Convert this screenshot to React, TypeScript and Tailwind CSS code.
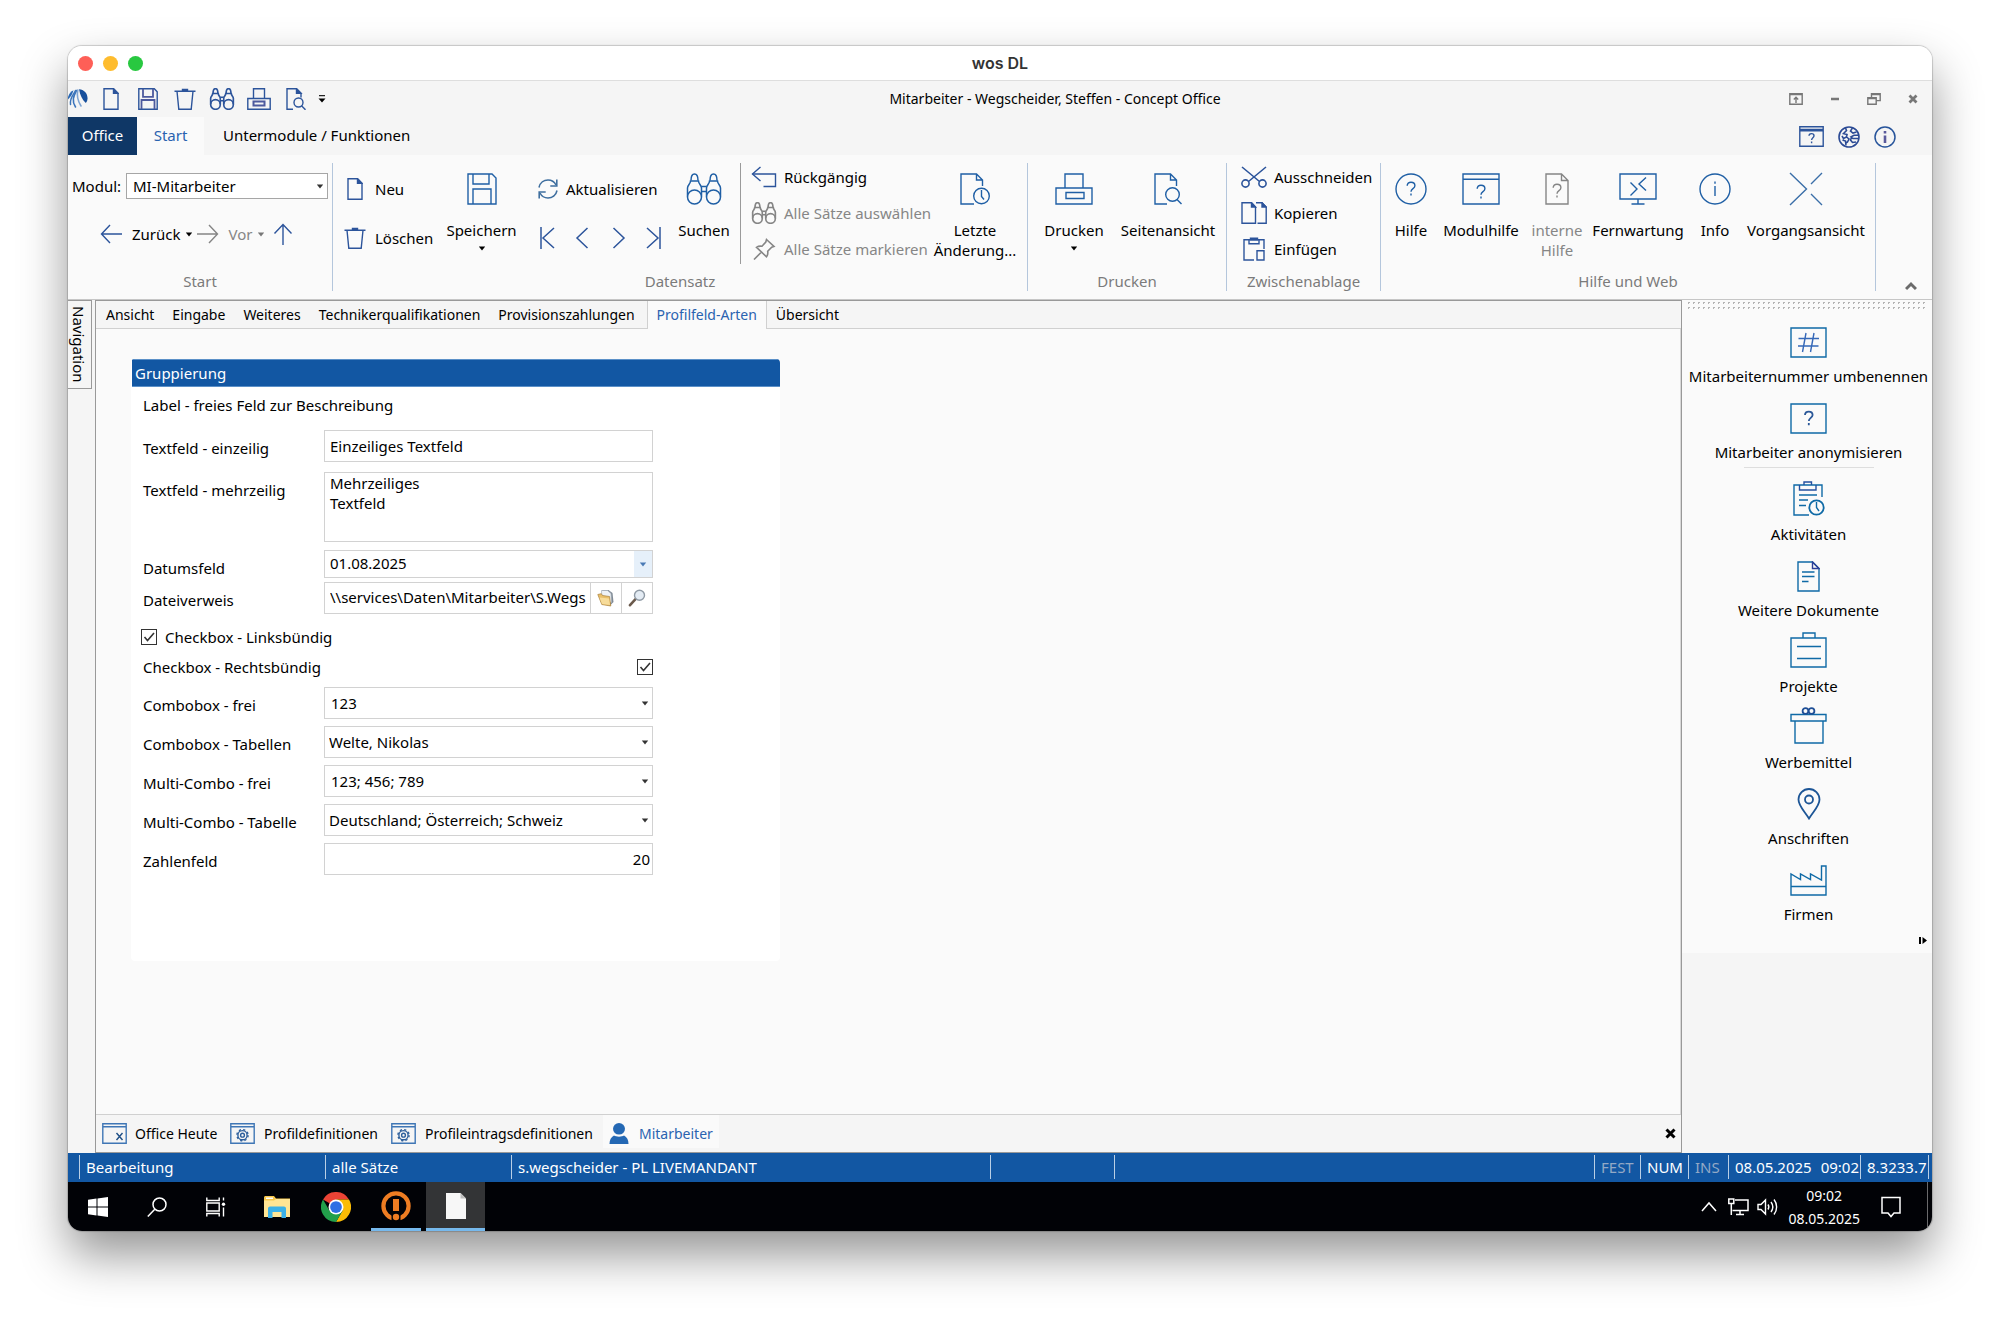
import React from "react";

type IconProps = { className?: string };

function Svg({
  w,
  h,
  className = "text-[#1f5fa5]",
  sw = 1.4,
  children,
}: {
  w: number;
  h: number;
  className?: string;
  sw?: number;
  children: React.ReactNode;
}) {
  return (
    <svg
      width={w}
      height={h}
      viewBox={`0 0 ${w} ${h}`}
      fill="none"
      stroke="currentColor"
      strokeWidth={sw}
      className={`shrink-0 ${className}`}
      aria-hidden="true"
    >
      {children}
    </svg>
  );
}

const SMALL = "text-[#2c549b]";
const GREY = "text-[#858585]";
const SIDE = "text-[#0f6aa6]";

/* ---------- small icons ---------- */
const DocS = () => (
  <Svg w={16} h={22} className={SMALL}>
    <path d="M1 .8h9.5L15 5.4v15.8H1z" />
    <path d="M10.500 .8v4.6H15z" fill="currentColor" />
  </Svg>
);
const SaveS = () => (
  <Svg w={20} h={22} className={SMALL}>
    <path d="M.8 .8h15.5l2.9 3v17.4H.8z" />
    <path d="M5 .8v8h10v-8M3.500 21V12h13v9" strokeWidth={1.8} stroke="#4d5a9e" />
  </Svg>
);
const TrashS = () => (
  <Svg w={22} h={22} className={SMALL}>
    <path d="M.5 3.200h21M3 3.200l1.800 18h12.400l1.800-18" />
    <path d="M8.500 3V1.500h5V3z" fill="currentColor" />
  </Svg>
);
const Binoc = ({ s = 1, className }: IconProps & { s?: number }) => (
  <svg
    width={s === 1 ? 36 : 26}
    height={s === 1 ? 32 : 22}
    viewBox="0 0 36 32"
    fill="none"
    stroke="currentColor"
    strokeWidth={s === 1 ? 1.5 : 2.4}
    className={`shrink-0 ${className ?? "text-[#1f5fa5]"}`}
    aria-hidden="true"
  >
    <circle cx="8.500" cy="24" r="7" />
    <circle cx="27.500" cy="24" r="7" />
    <path d="M1.500 23.500V15c0-3 3-4 3-7h8c0 3 3 4 3 7v8.500M20.500 23.500V15c0-3 3-4 3-7h8c0 3 3 4 3 7v8.500" />
    <path d="M5 7.500C5 4 6 1 8.500 1S12 4 12 7.500M24 7.500C24 4 25 1 27.500 1S31 4 31 7.500M15.500 13.500h5M15.500 18.500h5" />
  </svg>
);
const PrintS = () => (
  <Svg w={24} h={22} className={SMALL}>
    <path d="M.8 10.500h22.400v10.700H.8zM6.500 10.500V.8h11v9.700" />
    <path d="M6.500 13.500h11v4h-11z" strokeWidth={2} stroke="#4d5a9e" />
  </Svg>
);
const DocSearchS = () => (
  <Svg w={20} h={22} className={SMALL}>
    <path d="M7 21.200H1V.8h9.500L15 5.400v4.200" />
    <path d="M10.500 .8v4.600H15z" fill="currentColor" />
    <circle cx="12.500" cy="14.500" r="4.500" />
    <path d="M15.500 17.800l4 4" />
  </Svg>
);
const Caret = ({ className = "text-black" }: IconProps) => (
  <svg width="8" height="5" viewBox="0 0 8 5" className={`shrink-0 ${className}`} aria-hidden="true">
    <path d="M.8 .5h6.400L4 4.500z" fill="currentColor" />
  </svg>
);
const Refresh = () => (
  <Svg w={20} h={22} className="text-[#3f6f9f]" sw={1.6}>
    <path d="M1 9.500C2 4.500 6 2 10 2c3.500 0 6.500 2 8 5M19 12.500C18 17.500 14 20 10 20c-3.500 0-6.500-2-8-5" />
    <path d="M18.800 1.500V8h-6.500M1.200 20.500V14h6.500" />
  </Svg>
);
const ArrowL = () => (
  <Svg w={22} h={20} className={`mr-1.5 ${SMALL}`}>
    <path d="M10 1L1.500 10 10 19M1.500 10H22" />
  </Svg>
);
const ArrowR = () => (
  <Svg w={22} h={20} className={`mr-1.5 ${GREY}`}>
    <path d="M12 1l8.500 9L12 19M20.500 10H0" />
  </Svg>
);
const ArrowU = () => (
  <Svg w={20} h={22} className={SMALL}>
    <path d="M1.500 10.500L10 1.500l8.500 9M10 1.500V22" />
  </Svg>
);
const Nav = ({ d }: { d: string }) => (
  <Svg w={18} h={22} className={SMALL} sw={1.5}>
    <path d={d} />
  </Svg>
);
const Undo = () => (
  <Svg w={26} h={22} className={SMALL}>
    <path d="M9.500 1L1.500 8l8 7" />
    <path d="M1.500 8h23v12.500h-12" />
  </Svg>
);
const Pin = () => (
  <Svg w={24} h={22} className={GREY} sw={1.6}>
    <path d="M14.500 1.500l7.500 7-2.300.8-4 4c.3 2 0 4-1.200 5.500L4.500 9.300c1.600-1.100 3.500-1.400 5.500-1.100l3.800-4.200zM9.500 14L2 21.500" />
  </Svg>
);
const Scissors = () => (
  <Svg w={26} h={22} className={SMALL} sw={1.6}>
    <path d="M1 1l17.500 14.500M25 1L7.500 15.500" />
    <circle cx="4.500" cy="17.500" r="3.600" />
    <circle cx="21.500" cy="17.500" r="3.600" />
  </Svg>
);
const Copy = () => (
  <Svg w={26} h={22} className={SMALL}>
    <path d="M1 .8h9.500L14.500 5v16.200H1zM16.500 21.200h8.700V5L21 .8h-6" />
    <path d="M10.500 .8V5h4zM21 .8V5h4z" fill="currentColor" />
  </Svg>
);
const Paste = () => (
  <Svg w={22} h={24} className={SMALL}>
    <path d="M11 23H1V2.800h20V12M6 2.800v4h10v-4" />
    <path d="M7.500 2.800V1.200h7v1.600z" fill="currentColor" />
    <path d="M14 13.800h7V23h-7z" />
  </Svg>
);

/* ---------- large icons ---------- */
const SaveL = () => (
  <Svg w={30} h={32}>
    <path d="M1 1h24l4 4v26H1zM6 1v10h16V1M6 31V16h18v15" />
  </Svg>
);
const DocClockL = () => (
  <Svg w={30} h={32}>
    <path d="M14 31H1V1h15.500L22.500 7v6M16.500 1v6h6" />
    <circle cx="21.500" cy="23" r="7.800" />
    <path d="M21.500 17v6.500l2.500 3" />
  </Svg>
);
const PrintL = () => (
  <Svg w={38} h={32}>
    <path d="M1 15h36v16H1zM10 15V1h18v14M11 19.500h18v6H11z" />
  </Svg>
);
const DocSearchL = () => (
  <Svg w={28} h={32}>
    <path d="M13 31H1V1h15.500L22.500 7v6M16.500 1v6h6" />
    <circle cx="18.500" cy="21.500" r="6.800" />
    <path d="M23 26.500l4.500 4.500" />
  </Svg>
);
const HelpL = () => (
  <Svg w={32} h={32}>
    <circle cx="16" cy="16" r="15" />
    <path d="M12.200 12.800c0-2.300 1.600-3.600 3.800-3.600s3.900 1.300 3.900 3.500c0 2.900-3.900 3-3.900 6M16 20.600v2" />
  </Svg>
);
const ModHelpL = () => (
  <Svg w={38} h={32}>
    <path d="M1 1h36v30H1zM1 6.200h36" />
    <path d="M15.200 15.800c0-2.300 1.600-3.600 3.800-3.600s3.900 1.300 3.900 3.500c0 2.900-3.900 3-3.900 6M19 23.600v2" />
  </Svg>
);
const DocHelpL = () => (
  <Svg w={24} h={32} className={GREY}>
    <path d="M1 1h15.500L23 7.500V31H1zM16.500 1v6.500H23" />
    <path d="M8.200 14.800c0-2.300 1.600-3.600 3.800-3.600s3.900 1.300 3.900 3.500c0 2.900-3.900 3-3.900 6M12 22.600v2" />
  </Svg>
);
const RemoteL = () => (
  <Svg w={38} h={32}>
    <path d="M1 1h36v25H1zM19 26v4.500M12.500 31h13M11.500 9.500l6.500 6.500-6.500 6.500M27 4.500L20 11l7 6.500" />
  </Svg>
);
const InfoL = () => (
  <Svg w={32} h={32}>
    <circle cx="16" cy="16" r="15" />
    <path d="M16 13v10M16 8.500v2.300" />
  </Svg>
);
const CrossL = () => (
  <Svg w={34} h={34} className="text-[#3a6ea8]">
    <path d="M1 1l16.500 16L1 33M33 1L22 12M33 33L22 22" />
  </Svg>
);

/* ---------- sidebar icons ---------- */
const HashI = () => (
  <Svg w={37} h={31} className={SIDE}>
    <path d="M1 1h35v29H1z" />
    <path d="M16 6l-3.500 19M24 6l-3.500 19M8.500 11.500H29M8 19h20.500" stroke="#3568b8" />
  </Svg>
);
const QuestI = () => (
  <Svg w={37} h={31} className={SIDE}>
    <path d="M1 1h35v29H1z" />
    <path d="M15 12c0-2 1.500-3.400 3.800-3.400S22.600 10 22.600 12c0 2.800-3.800 3-3.800 6M18.800 20v2.300" stroke="#2a5798" strokeWidth={1.8} />
  </Svg>
);
const ActI = () => (
  <Svg w={32} h={35} className={SIDE}>
    <path d="M16 34H1V4h28v12M6 14h18M6 19h9M6 24.500h7" />
    <path d="M6.500 4v5H23V4M11 4V1h7.500v3" stroke="#2451a0" />
    <circle cx="23.500" cy="26.500" r="7.200" strokeWidth={1.8} />
    <path d="M23.500 21v5.500l2.500 3.500" />
  </Svg>
);
const DocI = () => (
  <Svg w={23} h={31} className={SIDE}>
    <path d="M1 1h14.500L22 7.500V30H1zM5 11h12.500M5 15.500h12.500M5 20.500h6.500" />
    <path d="M15.500 1v6.500H22z" stroke="#2b3f98" />
  </Svg>
);
const ProjI = () => (
  <Svg w={37} h={36} className={SIDE}>
    <path d="M1 6h35v29H1zM13 6V1h12v5M7 14.500h24M7 26.500h24" />
  </Svg>
);
const GiftI = () => (
  <Svg w={37} h={37} className={SIDE}>
    <path d="M1 7.500h35V14H1zM5 14h28v22H5z" />
    <g stroke="#1f4f96" strokeWidth={1.8}>
      <circle cx="15.500" cy="4" r="2.900" />
      <circle cx="21.500" cy="4" r="2.900" />
    </g>
  </Svg>
);
const PinI = () => (
  <Svg w={24} h={32} className="text-[#1c5596]" sw={1.8}>
    <path d="M12 30.500C7.500 23 1.500 18 1.500 11.500a10.500 10.500 0 0121 0C22.500 18 16.500 23 12 30.500z" />
    <circle cx="12" cy="11.500" r="4" />
  </Svg>
);
const FactoryI = () => (
  <Svg w={38} h={31} className={SIDE}>
    <path d="M1 21.500h35M1 30V9l9.500 5.500V9l10 5.500V9l11 6V1H36v29z" />
  </Svg>
);

/* ---------- ribbon parts ---------- */
function Big({
  icon,
  label,
  label2,
  caret,
  muted,
  className,
}: {
  icon: React.ReactNode;
  label: string;
  label2?: string;
  caret?: boolean;
  muted?: boolean;
  className: string;
}) {
  return (
    <button
      type="button"
      className={`flex shrink-0 flex-col items-center pt-[10px] whitespace-nowrap ${muted ? "text-[#868686]" : "text-black"} ${className}`}
    >
      <span className="flex h-8 items-center">{icon}</span>
      <span className="mt-[15px] leading-5">{label}</span>
      {label2 && <span className="leading-5">{label2}</span>}
      {caret && (
        <span className="pt-1.5">
          <Caret />
        </span>
      )}
    </button>
  );
}

function Row({ icon, label, muted }: { icon: React.ReactNode; label: string; muted?: boolean }) {
  return (
    <button type="button" className={`flex h-[30px] items-center gap-2 whitespace-nowrap ${muted ? "text-[#868686]" : "text-black"}`}>
      <span className="flex w-6 justify-center">{icon}</span>
      {label}
    </button>
  );
}

function Group({ label, className, children }: { label: string; className: string; children: React.ReactNode }) {
  return (
    <section className={`flex h-32 shrink-0 flex-col border-r border-[#b4c6dc] ${className}`}>
      <div className="flex flex-1">{children}</div>
      <div className="text-center leading-5 text-[#7b7b7b]">{label}</div>
    </section>
  );
}

function Ribbon() {
  return (
    <div className="flex items-start border-b border-[#c6c6c6] bg-[#fafafa] py-2">
      <Group label="Start" className="w-[265px]">
        <div className="w-full">
          <div className="flex h-[46px] items-center gap-1.5 pr-1 pl-1">
            <label htmlFor="modul" className="w-12">
              Modul:
            </label>
            <div className="relative flex-1">
              <select id="modul" className="h-[26px] w-full appearance-none border border-[#a6a6a6] bg-white px-1.5 pb-px leading-5">
                <option>MI-Mitarbeiter</option>
              </select>
              <Caret className="pointer-events-none absolute top-[11px] right-1 text-[#333]" />
            </div>
          </div>
          <div className="flex h-[50px] items-center gap-1 pl-8">
            <button type="button" className="flex items-center gap-1">
              <ArrowL /> Zurück
              <Caret />
            </button>
            <button type="button" className="flex items-center gap-1 text-[#868686]">
              <ArrowR /> Vor
              <Caret className="text-[#777]" />
            </button>
            <button type="button" aria-label="Aufwärts" className="ml-1">
              <ArrowU />
            </button>
          </div>
        </div>
      </Group>

      <Group label="Datensatz" className="w-[695px]">
        <div className="ml-[10px] w-[88px] shrink-0 pt-[2px]">
          <button type="button" className="flex h-12 items-center gap-2">
            <span className="flex w-6 justify-center">
              <DocS />
            </span>
            Neu
          </button>
          <button type="button" className="flex h-[50px] items-center gap-2">
            <span className="flex w-6 justify-center">
              <TrashS />
            </span>
            Löschen
          </button>
        </div>
        <Big icon={<SaveL />} label="Speichern" caret className="w-[101px]" />
        <div className="w-[140px] shrink-0 pt-[2px]">
          <button type="button" className="flex h-12 items-center gap-2 pl-1.5">
            <Refresh /> Aktualisieren
          </button>
          <div className="flex h-[50px] items-center">
            {[
              ["Erster", "M2 0v22M15 1L4 11l11 10"],
              ["Vorheriger", "M13.500 1L3 11l10.500 10"],
              ["Nächster", "M4.500 1L15 11 4.500 21"],
              ["Letzter", "M16 0v22M3 1l11 10L3 21"],
            ].map(([n, d]) => (
              <button key={n} type="button" aria-label={n} className="flex w-[35px] justify-start pl-[7px]">
                <Nav d={d} />
              </button>
            ))}
          </div>
        </div>
        <Big icon={<Binoc />} label="Suchen" className="w-16" />
        <div className="ml-1 h-[101px] w-px shrink-0 bg-[#9a9a9a]" />
        <div className="-mt-px ml-[11px] flex w-[175px] shrink-0 flex-col gap-1.5">
          <Row icon={<Undo />} label="Rückgängig" />
          <Row icon={<Binoc s={2} className={GREY} />} label="Alle Sätze auswählen" muted />
          <Row icon={<Pin />} label="Alle Sätze markieren" muted />
        </div>
        <Big icon={<DocClockL />} label="Letzte" label2="Änderung..." className="w-24" />
      </Group>

      <Group label="Drucken" className="w-[199px]">
        <Big icon={<PrintL />} label="Drucken" caret className="ml-1 w-[84px]" />
        <Big icon={<DocSearchL />} label="Seitenansicht" className="w-[104px]" />
      </Group>

      <Group label="Zwischenablage" className="w-[154px]">
        <div className="-mt-px ml-[15px] flex flex-col gap-1.5">
          <Row icon={<Scissors />} label="Ausschneiden" />
          <Row icon={<Copy />} label="Kopieren" />
          <Row icon={<Paste />} label="Einfügen" />
        </div>
      </Group>

      <Group label="Hilfe und Web" className="w-[495px]">
        <Big icon={<HelpL />} label="Hilfe" className="w-[60px]" />
        <Big icon={<ModHelpL />} label="Modulhilfe" className="w-20" />
        <Big icon={<DocHelpL />} label="interne" label2="Hilfe" muted className="w-[72px]" />
        <Big icon={<RemoteL />} label="Fernwartung" className="w-[90px]" />
        <Big icon={<InfoL />} label="Info" className="w-16" />
        <Big icon={<CrossL />} label="Vorgangsansicht" className="w-[118px]" />
      </Group>

      <button type="button" aria-label="Menüband reduzieren" className="mr-[15px] ml-auto self-end">
        <Svg w={12} h={10} className="text-[#6b6b6b]" sw={3}>
          <path d="M1 8l5-5 5 5" />
        </Svg>
      </button>
    </div>
  );
}

/* ---------- top bars ---------- */
const QUICK: [string, React.ReactNode][] = [
  ["Neu", <DocS key="n" />],
  ["Speichern", <SaveS key="s" />],
  ["Löschen", <TrashS key="l" />],
  ["Suchen", <Binoc key="f" s={2} className={SMALL} />],
  ["Drucken", <PrintS key="p" />],
  ["Seitenansicht", <DocSearchS key="v" />],
];

function TopBars() {
  return (
    <>
      <header className="grid h-[35px] grid-cols-[1fr_auto_1fr] items-center border-b border-[#dedede] bg-white">
        <div className="flex gap-[10px] pl-[10px]">
          <button type="button" aria-label="Schließen" className="size-[15px] rounded-full bg-[#fe5f57]" />
          <button type="button" aria-label="Minimieren" className="size-[15px] rounded-full bg-[#febc2e]" />
          <button type="button" aria-label="Zoomen" className="size-[15px] rounded-full bg-[#28c840]" />
        </div>
        <h1 className="font-[Inter,sans-serif] text-base leading-5 font-semibold text-[#333]">wos DL</h1>
      </header>

      <div className="flex h-9 items-center">
        <svg width="20" height="22" viewBox="0 0 20 22" className="shrink-0" aria-hidden="true">
          <path d="M0 9C1 5.500 3 3.500 5.500 2.200 4.500 6 2.500 9 0 11.500z" fill="#2a68b4" />
          <g fill="none" strokeLinecap="round">
            <path d="M7.500 2.500C5.500 7 1.500 10 2.500 16.500" stroke="#3c75bb" strokeWidth="1.500" />
            <path d="M8.500 2.500C5.500 8 3.500 13 7.500 19" stroke="#3c75bb" strokeWidth="1.600" />
            <path d="M9.800 2C8.500 8 9.500 12.500 13 18" stroke="#7fa5d4" strokeWidth="1.600" />
          </g>
          <path d="M11 1.200c5 .3 8.500 4 8.500 9 0 2-.6 3.600-1.700 4.800C14.500 12 12 7 11 1.200z" fill="#174f9c" />
        </svg>
        <div className="ml-1 flex items-center">
          {QUICK.map(([name, icon]) => (
            <button key={name} type="button" aria-label={name} className="flex w-[37px] justify-center">
              {icon}
            </button>
          ))}
          <button type="button" aria-label="Symbolleiste anpassen" className="ml-1">
            <svg width="8" height="8" viewBox="0 0 8 8" aria-hidden="true">
              <path d="M1 .700h6" stroke="#222" strokeWidth="1.200" />
              <path d="M.5 3.500h7L4 7.500z" fill="#000" />
            </svg>
          </button>
        </div>
        <div className="flex-1 pl-2 text-center text-sm leading-5">Mitarbeiter - Wegscheider, Steffen - Concept Office</div>
        <div className="flex items-center">
          <button type="button" aria-label="Menüband-Anzeigeoptionen" className="flex w-[39px] justify-center">
            <Svg w={14} h={12} className="text-[#777]">
              <path d="M.8 .8h12.400v10.400H.8zM.8 1.500h12.400M7 10V4.500M4.800 6.500L7 4.300l2.200 2.200" />
            </Svg>
          </button>
          <button type="button" aria-label="Fenster minimieren" className="flex w-[39px] justify-center">
            <Svg w={10} h={12} className="text-[#777]" sw={2.400}>
              <path d="M1 6h8" />
            </Svg>
          </button>
          <button type="button" aria-label="Fenster verkleinern" className="flex w-[39px] justify-center">
            <Svg w={14} h={12} className="text-[#777]">
              <path d="M4.500 4V.8h8.700v6.800h-3.500M4.500 1.500h8.700M.8 4.800h8.400v6.400H.8zM.8 5.500h8.400" />
            </Svg>
          </button>
          <button type="button" aria-label="Fenster schließen" className="flex w-[39px] justify-center">
            <Svg w={10} h={10} className="text-[#777]" sw={2.800}>
              <path d="M1.500 1.500l7 7M8.500 1.500l-7 7" />
            </Svg>
          </button>
        </div>
      </div>

      <nav className="flex h-[38px] items-stretch">
        <button type="button" className="w-[69px] bg-[#0f3766] pb-[2px] text-white">
          Office
        </button>
        <button type="button" className="w-[67px] bg-[#fafafa] pb-[2px] text-[#2a63b0]">
          Start
        </button>
        <button type="button" className="pb-[2px] pl-[19px]">
          Untermodule / Funktionen
        </button>
        <div className="mr-[36px] ml-auto flex items-center gap-[14px] pt-px">
          <button type="button" aria-label="Modulhilfe">
            <Svg w={25} h={21} className={SMALL}>
              <path d="M.8 .8h23.400v19.400H.8zM.8 3.500h23.400M.8 4.800h23.400" />
              <path d="M10 9.800c0-1.500 1-2.200 2.500-2.200s2.500.7 2.500 2.100c0 2-2.400 2-2.400 4.300M12.600 15.500v1.800" />
            </Svg>
          </button>
          <button type="button" aria-label="Web">
            <Svg w={22} h={22} className="text-[#2c4b95]" sw={1.6}>
              <circle cx="11" cy="11" r="10" />
              <path d="M7.500 2l1 2.500-3 3 3.500 1-.5 2.500-3 1.500L4 10M4.500 14l3 1 .5 4.500M8.500 11l2.500 2-1.500 3-1.500 1" />
              <path d="M14.500 1.800L12.500 5l2.500 2 3.500-1" />
              <path d="M21 9.200h-5l-3 1.600 2 1.700h6M13.500 11.500l-1 2.500 2 2.500 3.500-.5" />
            </Svg>
          </button>
          <button type="button" aria-label="Info">
            <Svg w={22} h={22} className="text-[#27549b]" sw={1.500}>
              <circle cx="11" cy="11" r="10" />
              <path d="M11 9.500V17M11 5v2.500" strokeWidth={2.600} stroke="#5a5a9c" />
            </Svg>
          </button>
        </div>
      </nav>
    </>
  );
}

/* ---------- form ---------- */
const field = "border border-[#d2d2d2] bg-white leading-5 outline-none";

function FormRow({
  id,
  label,
  className,
  labelClass,
  children,
}: {
  id: string;
  label: string;
  className: string;
  labelClass: string;
  children: React.ReactNode;
}) {
  return (
    <div className={`grid grid-cols-[181px_329px] ${className}`}>
      <label htmlFor={id} className={`leading-5 whitespace-nowrap ${labelClass}`}>
        {label}
      </label>
      {children}
    </div>
  );
}

function Combo({ id, value, pad }: { id: string; value: string; pad: string }) {
  return (
    <div className="relative">
      <select id={id} className={`h-8 w-full appearance-none ${field} ${pad}`}>
        <option>{value}</option>
      </select>
      <Caret className="pointer-events-none absolute top-[14px] right-1 text-[#333]" />
    </div>
  );
}

function Check({ id }: { id: string }) {
  return (
    <span className="relative flex size-4">
      <input id={id} type="checkbox" defaultChecked className="size-4 appearance-none border border-[#333] bg-white" />
      <Svg w={16} h={16} className="pointer-events-none absolute inset-0 text-[#333]" sw={1.600}>
        <path d="M3.500 8l3 3.500L13 4" />
      </Svg>
    </span>
  );
}

function ProfileForm() {
  return (
    <form className="mt-[30px] ml-[35px] w-[649px] overflow-hidden rounded-[4px] bg-white pb-[86px]">
      <h2 className="ml-px border-y border-[#5b90c8] bg-[#1257a3] pl-[3px] leading-[26px] text-white">Gruppierung</h2>
      <div className="pl-3">
        <p className="mt-1.5 leading-6">Label - freies Feld zur Beschreibung</p>
        <FormRow id="t1" label="Textfeld - einzeilig" className="mt-[13px] items-center" labelClass="pt-1">
          <input id="t1" className={`h-8 px-[5px] pb-px ${field}`} defaultValue="Einzeiliges Textfeld" />
        </FormRow>
        <FormRow id="t2" label="Textfeld - mehrzeilig" className="mt-[10px] items-start" labelClass="pt-2">
          <textarea
            id="t2"
            className={`h-[70px] resize-none px-[5px] ${field}`}
            defaultValue={"Mehrzeiliges\nTextfeld"}
          />
        </FormRow>
        <FormRow id="t3" label="Datumsfeld" className="mt-2 items-center" labelClass="pt-2">
          <div className={`flex h-7 ${field}`}>
            <input id="t3" className="min-w-0 flex-1 px-[5px] pb-[2px] outline-none" defaultValue="01.08.2025" />
            <button type="button" aria-label="Kalender öffnen" className="flex w-[18px] items-center justify-center bg-[#e6f0fa]">
              <Caret className="text-[#4a7ab5]" />
            </button>
          </div>
        </FormRow>
        <FormRow id="t4" label="Dateiverweis" className="mt-1 items-center" labelClass="pt-1">
          <div className={`flex h-8 ${field}`}>
            <input
              id="t4"
              className="min-w-0 flex-1 pb-[2px] pl-[5px] outline-none"
              defaultValue={"\\\\services\\Daten\\Mitarbeiter\\S.Wegs"}
            />
            <button type="button" aria-label="Ordner öffnen" className="flex w-[31px] items-center justify-center border-l border-[#d2d2d2]">
              <svg width="18" height="18" viewBox="0 0 18 18" aria-hidden="true">
                <path d="M5 1h6.500L15.500 4l1 9-4 4z" fill="#7f8a95" />
                <path d="M4.500 1.500h6L14 4.500l.5 9H5z" fill="#eef2f6" stroke="#a3adb7" strokeWidth=".7" />
                <path d="M.8 5.500l3.500-.8L5.500 6.500l7 1 1.300 9.500-9-1.500z" fill="#e9bf68" stroke="#a9803a" strokeWidth=".7" />
                <path d="M2.500 8.500l9.500 1 1 6.500-8-1z" fill="#f7dc9a" />
              </svg>
            </button>
            <button type="button" aria-label="Anzeigen" className="flex w-[31px] items-center justify-center border-l border-[#d2d2d2]">
              <svg width="18" height="18" viewBox="0 0 18 18" aria-hidden="true">
                <path d="M2 16.200l5.500-6" stroke="#6b5a4c" strokeWidth="2.600" strokeLinecap="round" />
                <circle cx="11.500" cy="6.200" r="5" fill="#e4ecf4" stroke="#8f9aa5" strokeWidth="1.400" />
              </svg>
            </button>
          </div>
        </FormRow>
        <div className="-ml-[2px] mt-[11px] flex h-6 items-center gap-2">
          <Check id="c1" />
          <label htmlFor="c1">Checkbox - Linksbündig</label>
        </div>
        <div className="mt-1.5 flex h-6 w-[510px] items-center justify-between">
          <label htmlFor="c2">Checkbox - Rechtsbündig</label>
          <Check id="c2" />
        </div>
        <FormRow id="k1" label="Combobox - frei" className="mt-2 items-center" labelClass="pt-1">
          <Combo id="k1" value="123" pad="px-1.5" />
        </FormRow>
        <FormRow id="k2" label="Combobox - Tabellen" className="mt-[7px] items-center" labelClass="pt-1">
          <Combo id="k2" value="Welte, Nikolas" pad="px-1" />
        </FormRow>
        <FormRow id="k3" label="Multi-Combo - frei" className="mt-[7px] items-center" labelClass="pt-1">
          <Combo id="k3" value="123; 456; 789" pad="px-1.5" />
        </FormRow>
        <FormRow id="k4" label="Multi-Combo - Tabelle" className="mt-[7px] items-center" labelClass="pt-1">
          <Combo id="k4" value="Deutschland; Österreich; Schweiz" pad="px-1" />
        </FormRow>
        <FormRow id="k5" label="Zahlenfeld" className="mt-[7px] items-center" labelClass="pt-1">
          <input id="k5" className={`h-8 px-[2px] text-right ${field}`} defaultValue="20" />
        </FormRow>
      </div>
    </form>
  );
}

/* ---------- document area ---------- */
const WinX = () => (
  <Svg w={25} h={21} className="text-[#3f76b5]">
    <path d="M.8 .8h23.400v19.400H.8zM.8 3.800h23.400" />
    <path d="M14.500 10l6 7M20.500 10l-6 7" stroke="#1f4f86" />
  </Svg>
);
const WinGear = () => (
  <Svg w={25} h={21} className="text-[#3f76b5]">
    <path d="M.8 .8h23.400v19.400H.8zM.8 3.800h23.400" />
    <g stroke="#2d5f9c">
      <circle cx="12.500" cy="12.200" r="1.900" />
      <circle cx="12.500" cy="12.200" r="4.600" />
      <circle cx="12.500" cy="12.200" r="5.600" strokeDasharray="2.200 2.200" />
    </g>
  </Svg>
);
const Person = () => (
  <svg width="20" height="21" viewBox="0 0 20 21" className="shrink-0" aria-hidden="true">
    <ellipse cx="10" cy="5.800" rx="6" ry="5.800" fill="#2468b4" />
    <path d="M.5 21c0-4 1.500-7 4.500-8.500 2 1.500 8 1.500 10 0 3 1.500 4.500 4.500 4.500 8.500z" fill="#2468b4" />
  </svg>
);

function DocumentArea() {
  return (
    <main className="flex min-w-0 flex-1 flex-col border border-[#999] bg-[#fafafa] text-[15px]">
      <nav className="flex h-7 items-stretch text-sm">
        <div className="flex items-center gap-[18px] border-b border-[#d0d0d0] bg-[#f5f5f5] pt-px pr-3 pl-[10px]">
          {["Ansicht", "Eingabe", "Weiteres", "Technikerqualifikationen", "Provisionszahlungen"].map((t) => (
            <button key={t} type="button">
              {t}
            </button>
          ))}
        </div>
        <button type="button" className="border-x border-[#d0d0d0] bg-[#fafafa] px-[9px] text-[#2a63b0]">
          Profilfeld-Arten
        </button>
        <div className="flex flex-1 items-center border-b border-[#d0d0d0] bg-[#f5f5f5] pt-px pl-[9px]">
          <button type="button">Übersicht</button>
        </div>
      </nav>
      <div className="min-h-[785px] flex-1 border-r border-[#d8d8d8]">
        <ProfileForm />
      </div>
      <nav className="flex h-[38px] items-center border-t border-[#d0d0d0] bg-[#f5f5f5] pl-1.5 text-sm">
        <button type="button" className="flex w-[128px] items-center gap-2">
          <WinX /> Office Heute
        </button>
        <button type="button" className="flex w-[161px] items-center gap-[9px]">
          <WinGear /> Profildefinitionen
        </button>
        <button type="button" className="flex w-[212px] items-center gap-[9px]">
          <WinGear /> Profileintragsdefinitionen
        </button>
        <button type="button" className="flex h-[33px] items-center gap-[10px] self-start bg-[#fafafa] px-1.5 pt-1 text-[#2a63b0]">
          <Person /> Mitarbeiter
        </button>
        <button type="button" aria-label="Modul schließen" className="mr-[5px] ml-auto">
          <Svg w={11} h={11} className="text-black" sw={3}>
            <path d="M1.500 1.500l8 8M9.500 1.500l-8 8" />
          </Svg>
        </button>
      </nav>
    </main>
  );
}

function SideItem({ icon, label }: { icon: React.ReactNode; label: string }) {
  return (
    <button type="button" className="flex h-[76px] w-full flex-col items-center justify-end whitespace-nowrap">
      {icon}
      <span className="mt-2 leading-5">{label}</span>
    </button>
  );
}

function Sidebar() {
  return (
    <aside className="w-[250px] shrink-0">
      <div className="h-[653px] bg-[#fafafa]">
        <div className="mx-1 h-[10px] bg-[radial-gradient(#b4b4b4_1px,transparent_1px)] bg-[size:5px_5px]" />
        <div className="flex flex-col items-center pl-[3px]">
          <SideItem icon={<HashI />} label="Mitarbeiternummer umbenennen" />
          <SideItem icon={<QuestI />} label="Mitarbeiter anonymisieren" />
          <div className="mt-[5px] h-px w-[130px] bg-[#dedede]" />
          <SideItem icon={<ActI />} label="Aktivitäten" />
          <SideItem icon={<DocI />} label="Weitere Dokumente" />
          <SideItem icon={<ProjI />} label="Projekte" />
          <SideItem icon={<GiftI />} label="Werbemittel" />
          <SideItem icon={<PinI />} label="Anschriften" />
          <SideItem icon={<FactoryI />} label="Firmen" />
        </div>
        <div className="mt-[13px] mr-[5px] flex justify-end">
          <svg width="8" height="7" viewBox="0 0 8 7" aria-hidden="true">
            <path d="M0 0h2v7H0zM3.500 0L8 3.500 3.500 7z" fill="#000" />
          </svg>
        </div>
      </div>
    </aside>
  );
}

/* ---------- bottom bars ---------- */
function StatusBar() {
  const cell = "flex h-6 items-center border-l border-[#b9cfe6] pl-1.5 whitespace-nowrap";
  return (
    <footer className="flex h-[29px] items-center bg-[#1257a3] pr-[3px] pb-px pl-[11px] text-white">
      <div className={`${cell} w-[246px]`}>Bearbeitung</div>
      <div className={`${cell} w-[186px]`}>alle Sätze</div>
      <div className={`${cell} w-[479px]`}>s.wegscheider - PL LIVEMANDANT</div>
      <div className={`${cell} w-[124px]`} />
      <div className={`${cell} flex-1`} />
      <div className={`${cell} w-[46px] text-[#93a9c6]`}>FEST</div>
      <div className={`${cell} w-[48px]`}>NUM</div>
      <div className={`${cell} w-[40px] text-[#93a9c6]`}>INS</div>
      <div className={`${cell} w-[132px] justify-between pr-px`}>
        <span>08.05.2025</span>
        <span>09:02</span>
      </div>
      <div className={`${cell} w-[69px] border-r`}>8.3233.7</div>
    </footer>
  );
}

function Taskbar() {
  const slot = "flex w-[59px] items-center justify-center";
  return (
    <div className="flex h-[49px] items-stretch bg-[#010206] text-white">
      <button type="button" aria-label="Start" className={slot}>
        <svg width="20" height="20" viewBox="0 0 20 20" fill="#fff" aria-hidden="true">
          <path d="M0 2.800L8.500 1.600v7.900H0zM9.500 1.400L20 0v9.500H9.500zM0 10.500h8.500v7.900L0 17.200zM9.500 10.500H20V20L9.500 18.600z" />
        </svg>
      </button>
      <button type="button" aria-label="Suche" className={slot}>
        <Svg w={20} h={20} className="text-white" sw={1.500}>
          <circle cx="12.500" cy="7.500" r="6.500" />
          <path d="M7.800 12.200L.8 19.500" />
        </Svg>
      </button>
      <button type="button" aria-label="Taskansicht" className={slot}>
        <Svg w={20} h={20} className="text-white" sw={1.400}>
          <path d="M.8 .5v3h12.400v-3M.8 19.500v-3h12.400v3M.8 6h12.400v8H.8zM17.500 .5v3M17.500 10.500v9" />
          <circle cx="17.500" cy="7.200" r="1.700" fill="currentColor" stroke="none" />
        </Svg>
      </button>
      <button type="button" aria-label="Explorer" className="flex w-16 items-center justify-center">
        <svg width="26" height="22" viewBox="0 0 26 22" aria-hidden="true">
          <path d="M0 1.500C0 .700.700 0 1.500 0H10l2 2.500h14V21H0z" fill="#f7c84c" />
          <path d="M0 4.500h10l2-1.500h14v18H0z" fill="#ffe594" />
          <path d="M2 1.500h7v1.500H2z" fill="#fff" />
          <path d="M4 22v-9.500C4 11.200 5 10.500 6 10.500h14c1 0 2 .7 2 2V22h-4.500v-6h-9v6z" fill="#3bb1e8" />
        </svg>
      </button>
      <button type="button" aria-label="Chrome" className="flex w-[54px] items-center justify-center">
        <svg width="30" height="30" viewBox="0 0 48 48" aria-hidden="true">
          <path d="M24 24L3.200 12A24 24 0 0144.800 12H24z" fill="#ea4335" />
          <path d="M24 12h20.800A24 24 0 0124 48l10.400-18z" fill="#fbbc05" />
          <path d="M34.400 30L24 48A24 24 0 013.200 12l10.400 18z" fill="#22a04b" />
          <circle cx="24" cy="24" r="12" fill="#fff" />
          <circle cx="24" cy="24" r="9.400" fill="#2f6fe4" />
        </svg>
      </button>
      <button type="button" aria-label="Concept Office" className="ml-2 flex w-[50px] flex-col items-center justify-end">
        <svg width="30" height="30" viewBox="0 0 30 30" className="mb-[7px]" aria-hidden="true">
          <circle cx="15" cy="15" r="12.600" fill="none" stroke="#ee7d22" strokeWidth="4.200" />
          <path d="M12 8h6v12h-6z" fill="#ee7d22" />
          <path d="M10.500 21.500h9V30h-9z" fill="#010206" />
          <circle cx="15" cy="26" r="3.200" fill="#ee7d22" />
        </svg>
        <span className="h-[3px] w-full bg-[#76b9ed]" />
      </button>
      <button type="button" aria-label="Dokument" className="ml-[5px] flex w-[59px] flex-col items-center justify-end bg-[#333436]">
        <svg width="20" height="26" viewBox="0 0 20 26" className="mb-[9px]" aria-hidden="true">
          <path d="M0 0h14.500L20 5.500V26H0z" fill="#f7f7f7" />
          <path d="M14.500 0L20 5.500h-5.500z" fill="#bdbdbd" />
        </svg>
        <span className="h-[3px] w-full bg-[#76b9ed]" />
      </button>
      <div className="mr-[4px] ml-auto flex items-center border-r border-[#6a6a6c] pr-[26px]">
        <button type="button" aria-label="Ausgeblendete Symbole" className="mr-[11px]">
          <Svg w={16} h={12} className="text-white" sw={1.500}>
            <path d="M1 10l7-8 7 8" />
          </Svg>
        </button>
        <button type="button" aria-label="Netzwerk" className="mr-2">
          <Svg w={21} h={18} className="text-white" sw={1.500}>
            <path d="M7 2h13v10.500H4.500M.8 1h5v4.500h-5zM3.300 5.500V17M12 12.500V16M8 16.500h8" />
          </Svg>
        </button>
        <button type="button" aria-label="Lautstärke" className="mr-[10px]">
          <Svg w={21} h={18} className="text-white" sw={1.400}>
            <path d="M1 6.500h3L8.500 2v14L4 11.500H1zM11 6.500c1 1.500 1 3.500 0 5M14 4c2.200 3 2.200 7 0 10M17 1.500c3.500 4.500 3.500 10.500 0 15" />
          </Svg>
        </button>
        <div className="mr-[21px] text-center text-sm leading-[23px]">
          <div>09:02</div>
          <div>08.05.2025</div>
        </div>
        <button type="button" aria-label="Benachrichtigungen">
          <Svg w={20} h={22} className="text-white" sw={1.500}>
            <path d="M1 1.500h18v15.500h-6l-3 3.500-3-3.500H1z" />
          </Svg>
        </button>
      </div>
    </div>
  );
}

export default function App() {
  return (
    <div className="min-h-screen bg-white px-[68px] pt-[46px] pb-[90px] font-['Noto_Sans',sans-serif] text-[15px] leading-5 text-black">
      <div className="overflow-hidden rounded-[14px] bg-[#f5f5f5] shadow-[0_0_1px_1px_rgba(0,0,0,0.18),0_24px_48px_rgba(0,0,0,0.42)]">
        <TopBars />
        <Ribbon />
        <div className="flex">
          <div className="w-[27px] shrink-0">
            <button
              type="button"
              className="h-[89px] w-6 border border-l-0 border-[#999] bg-[#f5f5f5] pr-[2px] [writing-mode:vertical-rl]"
            >
              Navigation
            </button>
          </div>
          <DocumentArea />
          <Sidebar />
        </div>
        <StatusBar />
        <Taskbar />
      </div>
    </div>
  );
}
